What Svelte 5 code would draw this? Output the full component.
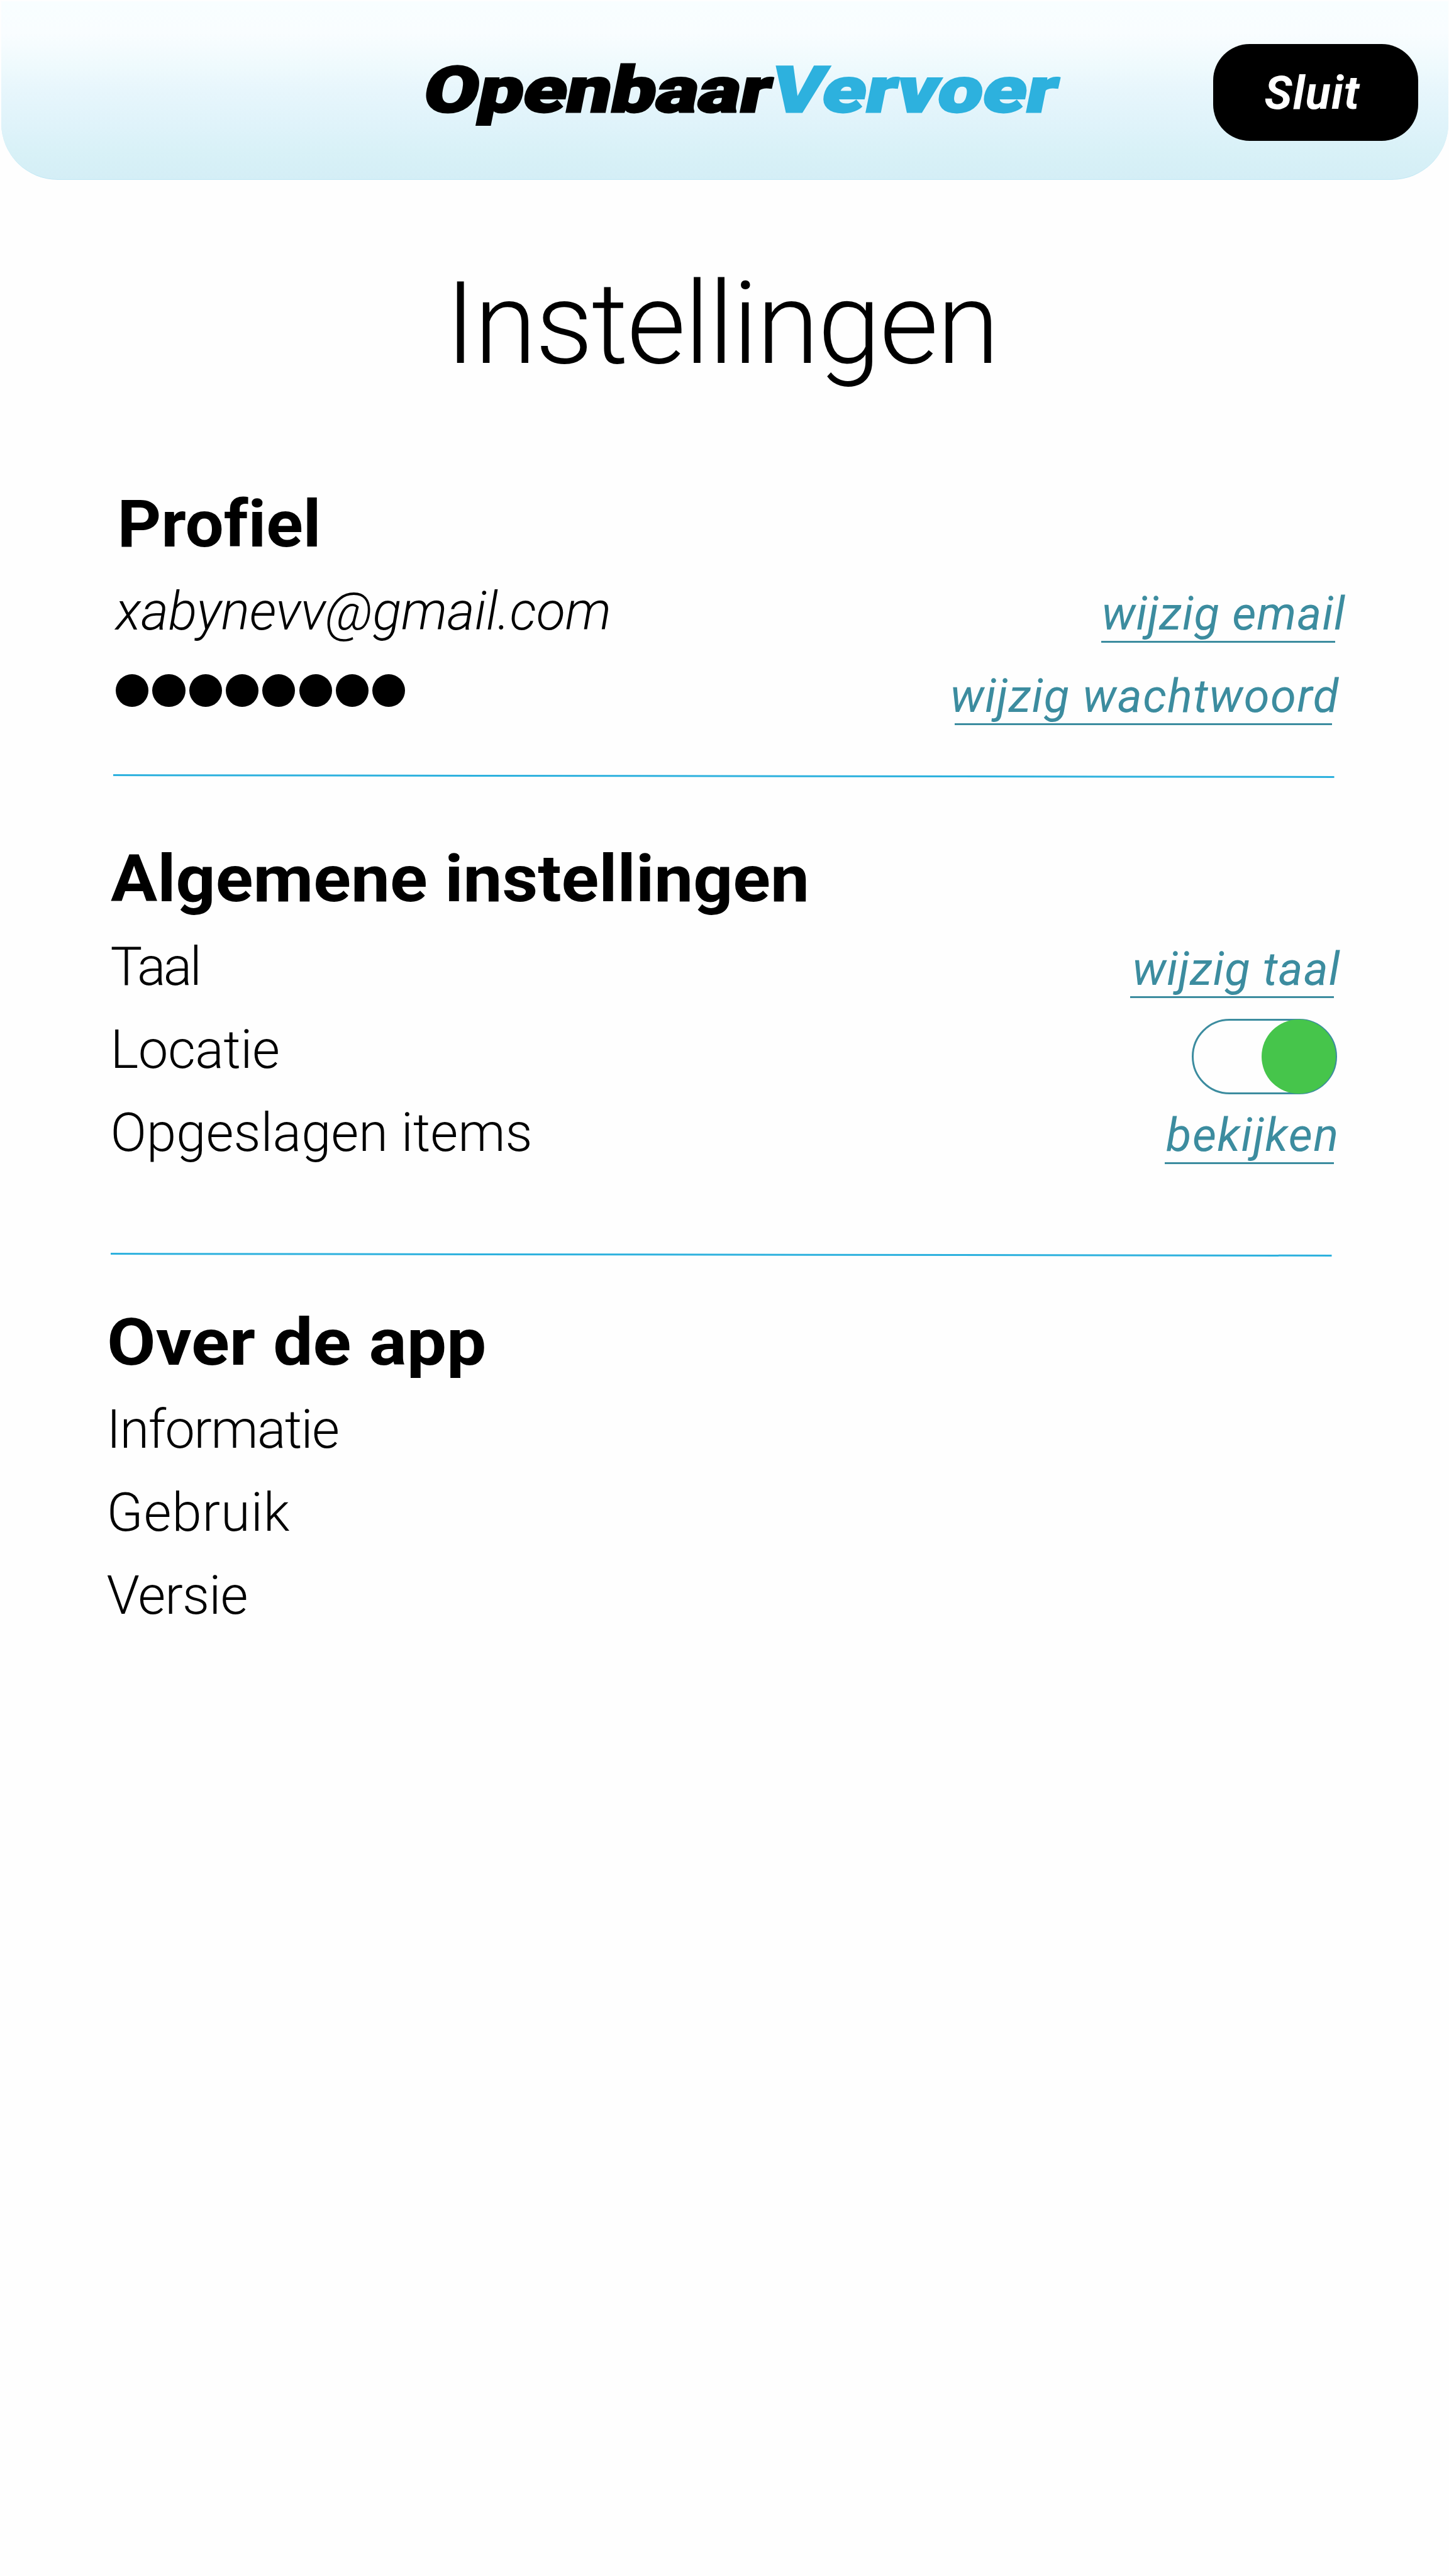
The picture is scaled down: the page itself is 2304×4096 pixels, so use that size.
<script>
  let locationOn = $state(true);

  const passwordLength = 8;
</script>

{#snippet divider(kind)}
  <svg class="divider {kind}" viewBox="0 0 1941.5 6" preserveAspectRatio="none" aria-hidden="true">
    <line x1="0" y1="1.6" x2="1941.5" y2="4.5" />
  </svg>
{/snippet}

<div class="screen">
  <header>
    <div class="logo"><span>Openbaar</span><span class="accent">Vervoer</span></div>
    <button class="close">Sluit</button>
  </header>

  <h1>Instellingen</h1>

  <section class="profile">
    <h2>Profiel</h2>
    <div class="row">
      <span class="label email">xabynevv@gmail.com</span>
      <a class="link change-email" href="#email">wijzig email</a>
    </div>
    <div class="row">
      <div class="dots">
        {#each Array(passwordLength) as _}
          <i></i>
        {/each}
      </div>
      <a class="link change-password" href="#wachtwoord">wijzig wachtwoord</a>
    </div>
  </section>

  {@render divider('first')}

  <section class="general">
    <h2>Algemene instellingen</h2>
    <div class="row">
      <span class="label language">Taal</span>
      <a class="link change-language" href="#taal">wijzig taal</a>
    </div>
    <div class="row">
      <span class="label location">Locatie</span>
      <button
        class="toggle"
        class:on={locationOn}
        role="switch"
        aria-checked={locationOn}
        aria-label="Locatie"
        onclick={() => (locationOn = !locationOn)}
      ><span class="knob"></span></button>
    </div>
    <div class="row">
      <span class="label">Opgeslagen items</span>
      <a class="link view" href="#items">bekijken</a>
    </div>
  </section>

  {@render divider('second')}

  <section class="about">
    <h2>Over de app</h2>
    <div class="row"><span class="label info">Informatie</span></div>
    <div class="row"><span class="label usage">Gebruik</span></div>
    <div class="row"><span class="label version">Versie</span></div>
  </section>
</div>

<style>
  :global(body) {
    margin: 0;
    background: #fefefe;
  }

  .screen {
    box-sizing: border-box;
    width: 2304px;
    height: 4096px;
    padding-top: 1.5px;
    overflow: hidden;
    background: #fefefe;
    color: #000;
    font-family: Roboto, sans-serif;
  }

  header {
    box-sizing: border-box;
    display: flex;
    align-items: flex-start;
    justify-content: space-between;
    height: 284.5px;
    margin: 0 1.5px;
    padding: 68.5px 48px 0 667px;
    border-bottom: 1px solid #c1e7f4;
    border-radius: 0 0 90px 90px;
    background: linear-gradient(#f8feff 0%, #f9fdff 18%, #effafd 36%, #e7f6fc 50%, #dff3fa 70%, #d8f1f7 85%, #d4eef6 100%);
  }

  .logo {
    display: flex;
    gap: 1.5px;
    margin-top: 14px;
    font-size: 101.5px;
    font-weight: 900;
    line-height: 120px;
    letter-spacing: 0.01px;
    white-space: nowrap;
    -webkit-text-stroke: 3px currentColor;
    paint-order: stroke fill;
    transform-origin: 0 94.5px;
    transform: skewX(-11.3deg) scaleX(1.242);
  }

  .accent {
    color: #2db1de;
    letter-spacing: 0.5px;
  }

  .close {
    width: 325.6px;
    height: 154.2px;
    padding: 2px 0 0 81.7px;
    border: 0;
    border-radius: 58px;
    background: #000;
    color: #fff;
    font: italic 700 73.6px/152px Roboto, sans-serif;
    letter-spacing: 1.18px;
    text-align: left;
  }

  h1 {
    margin: 129px 0 159px;
    padding-right: 9px;
    font-size: 181px;
    font-weight: 290;
    line-height: 200px;
    letter-spacing: -2.3px;
    text-align: center;
  }

  section {
    padding-right: 183px;
  }

  h2 {
    width: max-content;
    margin: 0 0 12px;
    font-size: 104.5px;
    font-weight: 700;
    line-height: 120px;
    letter-spacing: 0.01px;
    transform-origin: 0 0;
  }

  .profile {
    padding-left: 184px;
  }

  .profile h2 {
    padding-left: 2.3px;
    transform: scaleX(1.038);
  }

  .general {
    padding-left: 175.5px;
  }

  .general h2 {
    margin-bottom: 12.7px;
    transform: scaleX(1.058);
  }

  .about {
    padding-left: 169.5px;
  }

  .about h2 {
    transform: scaleX(1.078);
  }

  .row {
    display: flex;
    align-items: baseline;
    justify-content: space-between;
    height: 131.8px;
  }

  .about .row {
    height: 132.2px;
  }

  .label {
    font-size: 85px;
    font-weight: 340;
    line-height: 132px;
    letter-spacing: 0.01px;
    white-space: nowrap;
  }

  .email {
    font-style: italic;
    letter-spacing: -0.28px;
  }

  .language {
    letter-spacing: -3.66px;
  }

  .location {
    letter-spacing: -0.48px;
  }

  .info {
    letter-spacing: -1.63px;
  }

  .usage {
    letter-spacing: 0.92px;
  }

  .version {
    letter-spacing: -0.89px;
  }

  .link {
    position: relative;
    color: #3c8c9f;
    font-size: 74px;
    font-style: italic;
    font-weight: 410;
    line-height: 132px;
    letter-spacing: 1.09px;
    text-decoration: none;
    white-space: nowrap;
  }

  .link::after {
    content: '';
    position: absolute;
    right: 17px;
    bottom: 20px;
    left: 0;
    height: 3px;
    background: #3c8c9f;
  }

  .change-email {
    margin-right: -18.6px;
  }

  .change-password {
    margin-top: 3.5px;
    margin-left: auto;
    margin-right: -8.6px;
    letter-spacing: 1.48px;
  }

  .change-password::after {
    right: 11.2px;
    left: 6.8px;
  }

  .change-language {
    margin-right: -10.4px;
  }

  .change-language::after {
    right: 10.5px;
    left: -3.2px;
  }

  .view {
    margin-right: -8.7px;
    letter-spacing: 1.62px;
  }

  .view::after {
    right: 8.8px;
    left: -1.8px;
  }

  .dots {
    display: flex;
    align-self: flex-start;
    gap: 6.14px;
    margin-top: 34.4px;
  }

  .dots i {
    width: 52.2px;
    height: 52.2px;
    border-radius: 50%;
    background: #000;
  }

  .toggle {
    box-sizing: border-box;
    position: relative;
    align-self: flex-start;
    width: 230.2px;
    height: 120.2px;
    margin: 17px -4.5px -6px 0;
    padding: 0;
    border: 3px solid #3c8c9f;
    border-radius: 60.1px;
    background: #fefefe;
  }

  .knob {
    position: absolute;
    top: -1.8px;
    left: -1px;
    width: 117.4px;
    height: 117.8px;
    border-radius: 50%;
    background: #b9c4c8;
  }

  .on .knob {
    right: -1px;
    left: auto;
    background: #46c54b;
  }

  .divider {
    display: block;
    width: 1941.5px;
    height: 6px;
    overflow: visible;
    stroke: #2db1de;
    stroke-width: 3;
  }

  .first {
    margin: 61px 0 101.9px 179.5px;
  }

  .second {
    margin: 125.3px 0 77.2px 176.4px;
  }
</style>
